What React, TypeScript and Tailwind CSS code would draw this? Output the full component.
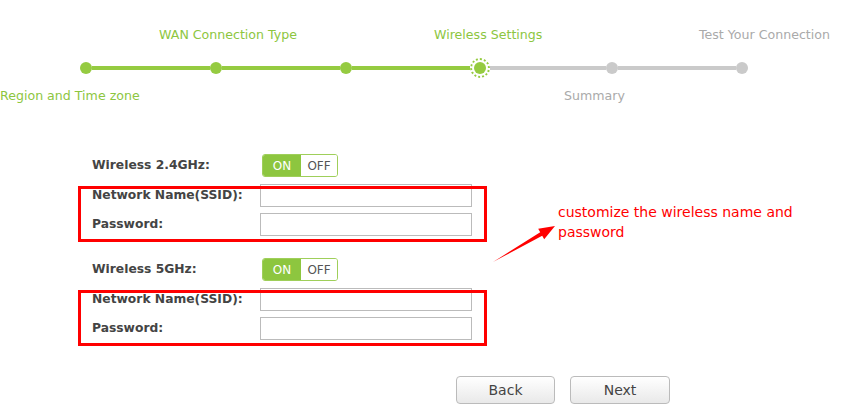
import React from 'react';

const font = { fontFamily: '"DejaVu Sans", Verdana, sans-serif' };

function Toggle() {
    return (
        <div className="flex h-[23px] w-[76px] overflow-hidden rounded-[3px] border border-[#9fcf5a] text-[12px] leading-none">
            <div className="flex w-[38px] items-center justify-center bg-[#8dc63f] text-white">ON</div>
            <div className="flex flex-1 items-center justify-center bg-white text-[#555]">OFF</div>
        </div>
    );
}

function Field({ label }: { label: string }) {
    return (
        <div className="flex items-center">
            <label className="w-[168px] text-[12.3px] font-bold text-[#444]">{label}</label>
            <input className="h-[23px] w-[212px] border border-[#bbb] bg-white outline-none" />
        </div>
    );
}

function Band({ title }: { title: string }) {
    return (
        <div>
            <div className="flex items-center">
                <span className="w-[170px] text-[12.3px] font-bold text-[#444]">{title}</span>
                <Toggle />
            </div>
            {/* fields wrapped by the red annotation box */}
            <div className="relative mt-[7px] flex flex-col gap-[6px]">
                <Field label="Network Name(SSID):" />
                <Field label="Password:" />
                <div className="pointer-events-none absolute -left-[14px] top-[2px] -bottom-[6px] w-[409px] border-[3px] border-[#ff0000]" />
            </div>
        </div>
    );
}

function Dot({ on }: { on: boolean }) {
    return <div className={on ? 'h-3 w-3 rounded-full bg-[#95cb41]' : 'h-3 w-3 rounded-full bg-[#cacaca]'} />;
}

function Line({ on, w }: { on: boolean; w: string }) {
    return <div className={`h-1 ${w} ${on ? 'bg-[#95cb41]' : 'bg-[#cacaca]'}`} />;
}

export default function App() {
    return (
        <div className="relative h-[418px] w-[855px] overflow-hidden bg-white" style={font}>
            {/* Steps */}
            <div className="pt-[28px]">
                <div className="flex h-[14px] items-center text-[12.6px] leading-[14px]">
                    <span className="ml-[159px] w-[275px] text-[#8dc63f]">WAN Connection Type</span>
                    <span className="w-[265px] text-[#8dc63f]">Wireless Settings</span>
                    <span className="whitespace-nowrap text-[#aaa]">Test Your Connection</span>
                </div>
                <div className="ml-[80px] mt-[16px] flex h-[20px] items-center">
                    <Dot on />
                    <Line on w="w-[118px]" />
                    <Dot on />
                    <Line on w="w-[118px]" />
                    <Dot on />
                    <Line on w="w-[118px]" />
                    <div className="flex h-[20px] w-[20px] items-center justify-center rounded-full border-2 border-dotted border-[#95cb41]">
                        <div className="h-[12px] w-[12px] rounded-full bg-[#95cb41]" />
                    </div>
                    <Line on={false} w="w-[116px]" />
                    <Dot on={false} />
                    <Line on={false} w="w-[118px]" />
                    <Dot on={false} />
                </div>
                <div className="mt-[11px] flex h-[14px] items-center text-[12.6px] leading-[14px]">
                    <span className="w-[564px] text-[#8dc63f]">Region and Time zone</span>
                    <span className="text-[#aaa]">Summary</span>
                </div>
            </div>

            {/* Form */}
            <div className="ml-[92px] mt-[51px] flex flex-col gap-[22px]">
                <Band title="Wireless 2.4GHz:" />
                <Band title="Wireless 5GHz:" />
            </div>

            {/* Buttons */}
            <div className="ml-[456px] mt-[36px] flex gap-[15px]">
                <button className="h-[28px] w-[99px] rounded-[4px] border border-[#bbb] bg-gradient-to-b from-white to-[#e9e9e9] text-[14px] text-[#444]">
                    Back
                </button>
                <button className="h-[28px] w-[100px] rounded-[4px] border border-[#bbb] bg-gradient-to-b from-white to-[#e9e9e9] text-[14px] text-[#444]">
                    Next
                </button>
            </div>

            {/* Annotation */}
            <p className="absolute left-[558px] top-[202px] w-[270px] text-[14px] leading-[20px] text-[#ff0000]">
                customize the wireless name and password
            </p>
            <svg className="pointer-events-none absolute left-0 top-0" width="855" height="418">
                <polygon
                    points="493,262 540.2,232.3 538.2,228.8 555,226 544.2,239.2 542.2,235.7"
                    fill="#ff0000"
                />
            </svg>
        </div>
    );
}
